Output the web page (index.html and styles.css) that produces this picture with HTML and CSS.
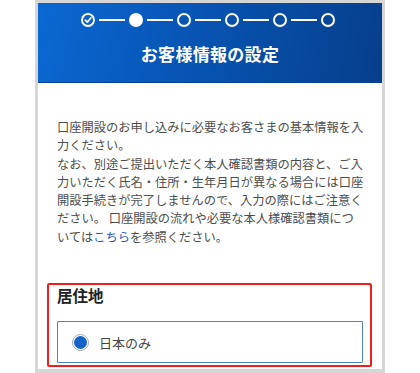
FILE: index.html
```html
<!DOCTYPE html>
<html lang="ja">
<head>
<meta charset="utf-8">
<link rel="stylesheet" href="styles.css">
</head>
<body>
<div class="frame">
  <header class="hero">
    <div class="steps">
      <span class="dot done"><svg width="14" height="14" viewBox="0 0 14 14"><circle cx="7" cy="7" r="6" fill="none" stroke="#fff" stroke-width="1.9"/><path d="M4.3 7.2 L6.3 9.1 L9.8 5" fill="none" stroke="#fff" stroke-width="1.8" stroke-linecap="round" stroke-linejoin="round"/></svg></span>
      <span class="line"></span>
      <span class="dot current"></span>
      <span class="line"></span>
      <span class="dot"></span>
      <span class="line"></span>
      <span class="dot"></span>
      <span class="line"></span>
      <span class="dot"></span>
      <span class="line"></span>
      <span class="dot"></span>
    </div>
    <h1 class="title">お客様情報の設定</h1>
  </header>
  <div class="content">
    <p class="intro">口座開設のお申し込みに必要なお客さまの基本情報を入力ください。<br>なお、別途ご提出いただく本人確認書類の内容と、ご入力いただく氏名・住所・生年月日が異なる場合には口座開設手続きが完了しませんので、入力の際にはご注意ください。 口座開設の流れや必要な本人様確認書類については<a class="link" href="#">こちら</a>を参照ください。</p>
    <section class="field">
      <h2 class="field-title">居住地</h2>
      <label class="option">
        <span class="radio"><span class="radio-inner"></span></span>
        <span class="option-label">日本のみ</span>
      </label>
    </section>
  </div>
</div>
</body>
</html>
```
FILE: styles.css
```css
html, body {
  margin: 0;
  padding: 0;
  background: #ffffff;
  height: 373px;
  overflow: hidden;
}
body {
  font-family: "Noto Sans CJK JP", "Noto Sans", sans-serif;
}
.frame {
  box-sizing: border-box;
  margin-left: 35px;
  width: 350px;
  height: 373px;
  border: 3px solid #d6d6d6;
  border-bottom-width: 4px;
  background: #ffffff;
  display: flex;
  flex-direction: column;
}
.hero {
  height: 80px;
  flex: none;
  box-sizing: border-box;
  background: linear-gradient(100deg, #0b68d2 0%, #0754b3 45%, #063f8b 100%);
  border-bottom: 1px solid #06429a;
  display: flex;
  flex-direction: column;
  align-items: center;
  padding-top: 10px;
}
.steps {
  display: flex;
  align-items: center;
  gap: 4px;
  height: 14px;
  padding-right: 4px;
}
.dot {
  box-sizing: border-box;
  width: 14px;
  height: 14px;
  border-radius: 50%;
  border: 2px solid #ffffff;
  flex: none;
}
.dot.done {
  border: none;
  display: block;
}
.dot.done svg { display: block; }
.dot.current {
  background: #ffffff;
}
.line {
  width: 26px;
  height: 2px;
  background: #ffffff;
  flex: none;
}
.title {
  margin: 15px 0 0;
  font-size: 17px;
  line-height: 24px;
  font-weight: 700;
  color: #ffffff;
  letter-spacing: 0.3px;
}
.content {
  padding: 35px 10px 0 9px;
}
.intro {
  margin: 0 0 0 10px;
  width: 308px;
  font-size: 12.25px;
  line-height: 18.3px;
  color: #4d4d4d;
}
.link {
  color: #1f5bb8;
  text-decoration: none;
}
.field {
  margin-top: 37px;
  box-sizing: border-box;
  height: 84px;
  border: 2px solid #f51c1c;
  border-radius: 2px;
  padding: 0 7px 0 8px;
}
.field-title {
  margin: 0;
  font-size: 15.5px;
  line-height: 20px;
  font-weight: 700;
  color: #222222;
}
.option {
  margin-top: 16px;
  box-sizing: border-box;
  height: 42px;
  border: 1px solid #4b87c6;
  border-radius: 1px;
  display: flex;
  align-items: center;
  padding-left: 14px;
}
.radio {
  box-sizing: border-box;
  width: 17px;
  height: 17px;
  border-radius: 50%;
  border: 1px solid #a8a8a8;
  display: flex;
  align-items: center;
  justify-content: center;
  background: #fff;
}
.radio-inner {
  width: 13px;
  height: 13px;
  border-radius: 50%;
  background: #1364c6;
}
.option-label {
  margin-left: 10px;
  font-size: 13px;
  color: #444444;
}
```
